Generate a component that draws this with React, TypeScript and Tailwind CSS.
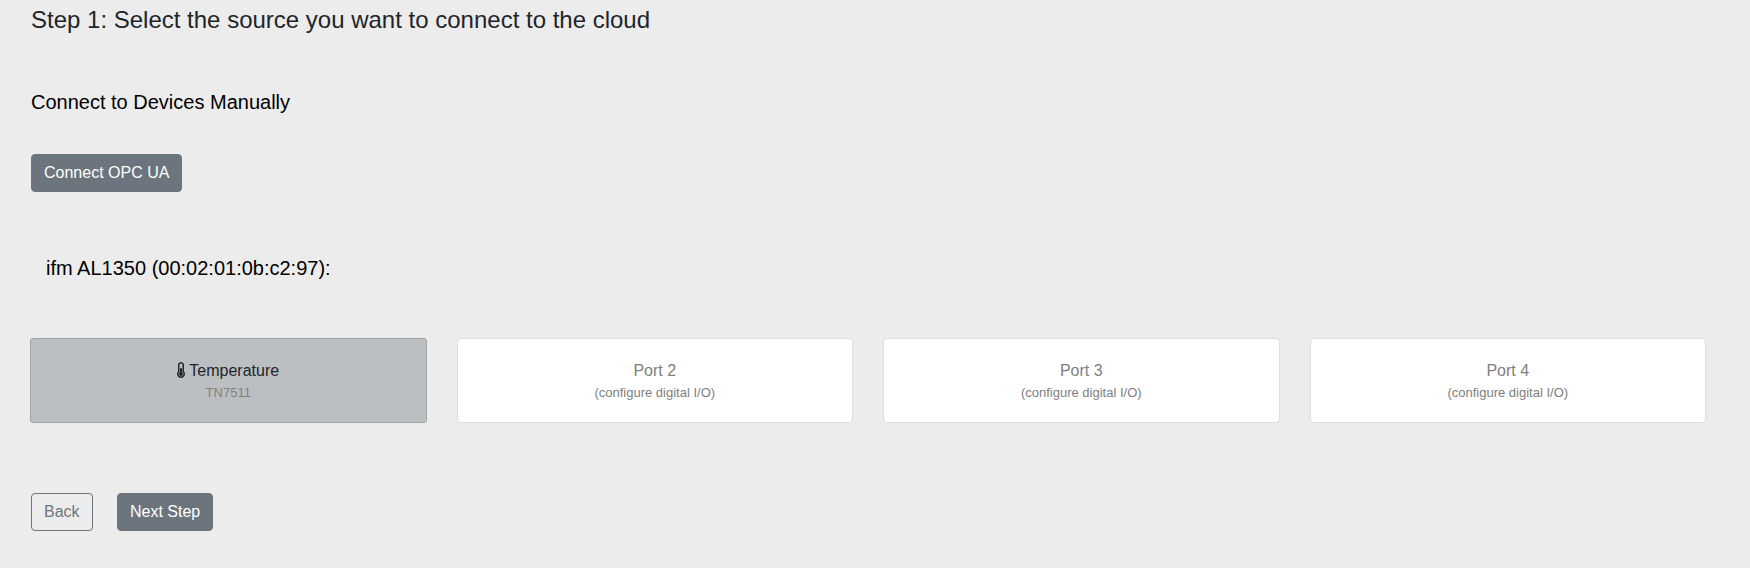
import React from "react";

const ports = ["Port 2", "Port 3", "Port 4"];

function Thermometer() {
  return (
    <svg viewBox="0 0 256 512" className="mb-0.5 h-4 w-2" fill="currentColor" aria-hidden="true">
      <path d="M192 384c0 35.346-28.654 64-64 64s-64-28.654-64-64c0-23.685 12.876-44.349 32-55.417V224c0-17.673 14.327-32 32-32s32 14.327 32 32v104.583c19.124 11.068 32 31.732 32 55.417zm32-84.653c19.912 22.563 32 52.194 32 84.653 0 70.696-57.303 128-128 128-.299 0-.609-.001-.909-.003C56.789 511.509-.357 453.636.002 383.333.166 351.135 12.225 321.755 32 299.347V96c0-53.019 42.981-96 96-96s96 42.981 96 96v203.347zM208 384c0-34.339-19.37-52.19-32-66.502V96c0-26.467-21.533-48-48-48S80 69.533 80 96v221.498c-12.732 14.428-31.825 32.1-31.999 66.08-.224 43.876 35.563 80.116 79.423 80.42L128 464c44.112 0 80-35.888 80-80z" />
    </svg>
  );
}

export default function App() {
  return (
    <main className="h-[568px] bg-[#ececec] px-[31px] pt-[5px] font-['Liberation_Sans',sans-serif] text-base text-[#212529]">
      <h1 className="text-2xl leading-[29px]">Step 1: Select the source you want to connect to the cloud</h1>
      <h2 className="mt-14 text-xl leading-6 text-black">Connect to Devices Manually</h2>
      <button className="mt-10 block h-[38px] rounded border border-[#6c757d] bg-[#6c757d] px-3 leading-6 text-white">Connect OPC UA</button>
      <h2 className="mt-16 pl-[15px] text-xl leading-6 text-black">ifm AL1350 (00:02:01:0b:c2:97):</h2>
      <div className="-ml-px mr-[13px] mt-[58px] grid grid-cols-4 gap-[30px] text-center">
        <div className="h-[85px] rounded-[3px] border border-[#a0a5a8] bg-[#bbbfc2] pt-5">
          <div className="flex items-center justify-center gap-1 leading-6"><Thermometer />Temperature</div>
          <div className="text-[13px] leading-5 text-[#808080]">TN7511</div>
        </div>
        {ports.map((port) => (
          <div key={port} className="h-[85px] rounded border border-[#dfdfdf] bg-white pt-5 text-[#808080]">
            <div className="leading-6">{port}</div>
            <div className="text-[13px] leading-5">(configure digital I/O)</div>
          </div>
        ))}
      </div>
      <div className="mt-[70px] flex gap-[24.4px]">
        <button className="h-[38px] rounded border border-[#6c757d] px-3 leading-6 text-[#6c757d]">Back</button>
        <button className="h-[38px] rounded border border-[#6c757d] bg-[#6c757d] px-3 leading-6 text-white">Next Step</button>
      </div>
    </main>
  );
}
